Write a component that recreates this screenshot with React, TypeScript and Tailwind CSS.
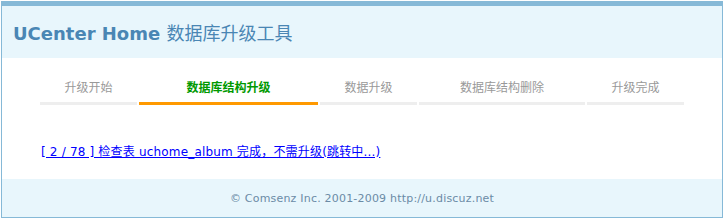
import React from "react";

const tabs = [
  { label: "升级开始", w: "w-[97px]", active: false },
  { label: "数据库结构升级", w: "w-[179px]", active: true },
  { label: "数据升级", w: "w-[97px]", active: false },
  { label: "数据库结构删除", w: "w-[166px]", active: false },
  { label: "升级完成", w: "w-[97px]", active: false },
];

export default function App() {
  return (
    <div className="w-[725px] h-[220px] bg-white pt-[1px] pl-[1px]" style={{ fontFamily: '"DejaVu Sans", Verdana, "Noto Sans CJK SC", sans-serif' }}>
      <div className="w-[722px] h-[217px] border border-t-[5px] border-[#86b9d7] flex flex-col">
        <div className="h-[52px] bg-[#e8f6fc] flex items-center pl-[11px] pt-[2px]">
          <span className="text-[18px] font-bold text-[#4a86b4] leading-none">
            UCenter Home{" "}
            <span className="font-normal" style={{ fontFamily: '"Noto Sans CJK SC", sans-serif' }}>数据库升级工具</span>
          </span>
        </div>
        <div className="h-[121px] bg-white flex flex-col">
          <div className="flex gap-[2px] pl-[38px] mt-[19px]">
            {tabs.map((t) => (
              <div
                key={t.label}
                className={`${t.w} h-[28px] flex items-start justify-center border-b-[3px] ${t.active ? "border-[#ff9900]" : "border-[#eeeeee]"}`}
              >
                <span
                  className={`text-[12px] leading-[20px] ${t.active ? "text-[#009900] font-bold" : "text-[#999999]"}`}
                  style={{ fontFamily: '"Noto Sans CJK SC", sans-serif' }}
                >
                  {t.label}
                </span>
              </div>
            ))}
          </div>
          <div className="pl-[39px] mt-[34px]">
            <a href="#" className="text-[12px] leading-[16px] tracking-[0.18px] text-[#0000ff] underline">
              [ 2 / 78 ] 检查表 uchome_album 完成，不需升级(跳转中...)
            </a>
          </div>
        </div>
        <div className="flex-1 bg-[#e8f6fc] flex items-center justify-center pt-[2px]">
          <span className="text-[11px] tracking-[0.2px] text-[#6b8ba6]">© Comsenz Inc. 2001-2009 http://u.discuz.net</span>
        </div>
      </div>
    </div>
  );
}
